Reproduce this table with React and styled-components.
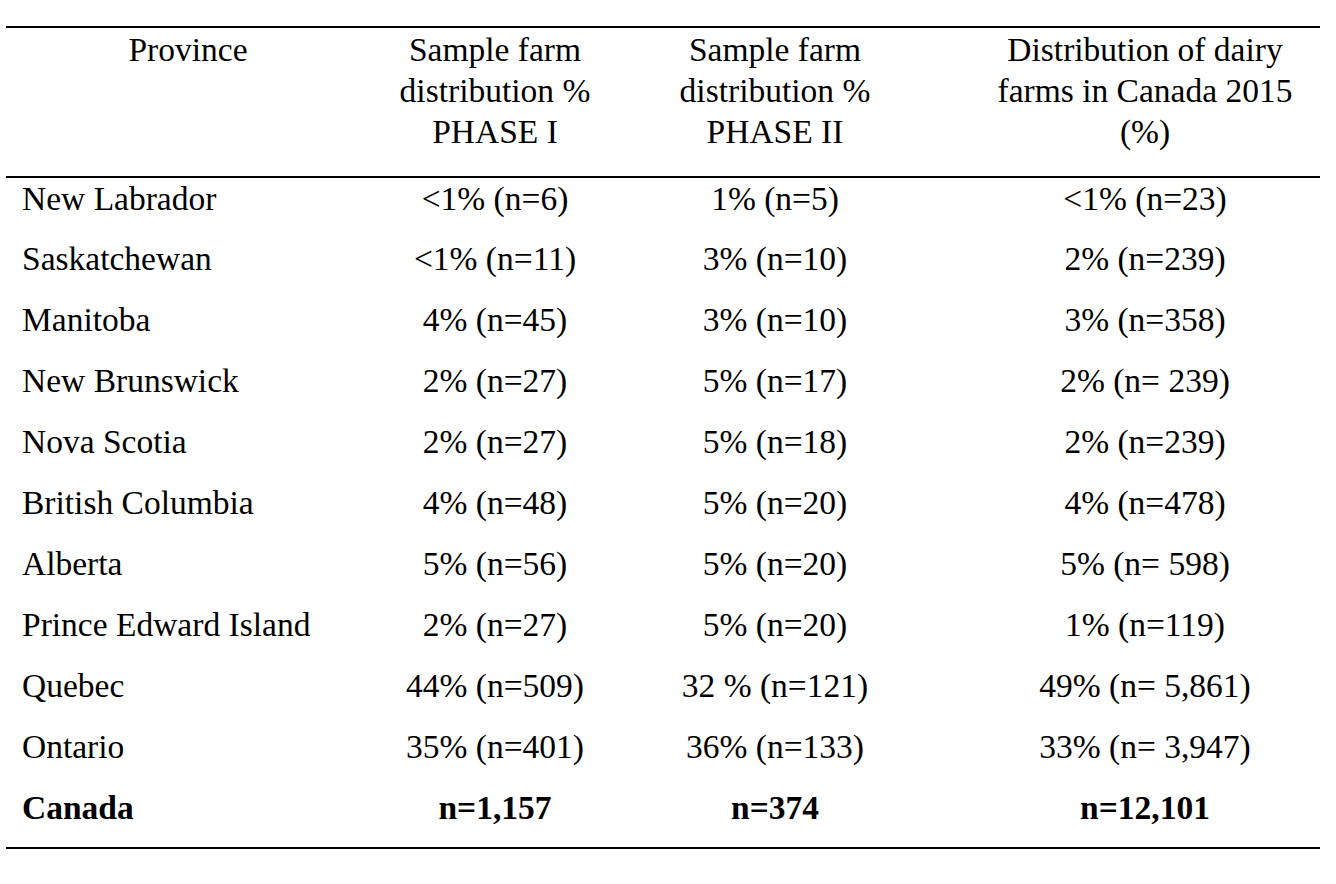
import React from 'react';
import styled, { createGlobalStyle } from 'styled-components';

const GlobalStyle = createGlobalStyle`
  html, body {
    margin: 0;
    padding: 0;
    background: #ffffff;
  }
  body {
    font-family: "Liberation Serif", "Times New Roman", serif;
    color: #000000;
  }
`;

const columns = [
  { key: 'province', width: 364, title: ['Province'] },
  { key: 'phase1', width: 250, title: ['Sample farm', 'distribution %', 'PHASE I'] },
  { key: 'phase2', width: 310, title: ['Sample farm', 'distribution %', 'PHASE II'] },
  { key: 'canada', width: 390, title: ['Distribution of dairy', 'farms in Canada 2015', '(%)'], offset: 40 },
];

const rows = [
  ['New Labrador', '<1% (n=6)', '1% (n=5)', '<1% (n=23)'],
  ['Saskatchewan', '<1% (n=11)', '3% (n=10)', '2% (n=239)'],
  ['Manitoba', '4% (n=45)', '3% (n=10)', '3% (n=358)'],
  ['New Brunswick', '2% (n=27)', '5% (n=17)', '2% (n= 239)'],
  ['Nova Scotia', '2% (n=27)', '5% (n=18)', '2% (n=239)'],
  ['British Columbia', '4% (n=48)', '5% (n=20)', '4% (n=478)'],
  ['Alberta', '5% (n=56)', '5% (n=20)', '5% (n= 598)'],
  ['Prince Edward Island', '2% (n=27)', '5% (n=20)', '1% (n=119)'],
  ['Quebec', '44% (n=509)', '32 % (n=121)', '49% (n= 5,861)'],
  ['Ontario', '35% (n=401)', '36% (n=133)', '33% (n= 3,947)'],
];

const total = ['Canada', 'n=1,157', 'n=374', 'n=12,101'];

const Page = styled.div`
  padding: 26px 16px 0 6px;
`;

const Table = styled.table`
  width: 1314px;
  table-layout: fixed;
  border-collapse: collapse;
  font-size: 33.5px;
  border-top: 2px solid #000;
  border-bottom: 2px solid #000;
`;

const HeadRow = styled.tr`
  border-bottom: 2px solid #000;
`;

const HeadCell = styled.th`
  font-weight: normal;
  text-align: center;
  vertical-align: top;
  line-height: 41px;
  padding: 1px 0 24px ${p => p.$offset || 0}px;
`;

const Cell = styled.td`
  height: 61px;
  box-sizing: border-box;
  vertical-align: top;
  line-height: 38px;
  padding: 2px 0 0 ${p => (p.$first ? 16 : p.$offset || 0)}px;
  text-align: ${p => (p.$first ? 'left' : 'center')};
  font-weight: ${p => (p.$bold ? 'bold' : 'normal')};
  white-space: nowrap;
`;

const App = () => (
  <Page>
    <GlobalStyle />
    <Table>
      <colgroup>
        {columns.map(c => <col key={c.key} style={{ width: c.width }} />)}
      </colgroup>
      <thead>
        <HeadRow>
          {columns.map(c => (
            <HeadCell key={c.key} $offset={c.offset}>
              {c.title.map((line, i) => (
                <React.Fragment key={i}>
                  {i > 0 && <br />}
                  {line}
                </React.Fragment>
              ))}
            </HeadCell>
          ))}
        </HeadRow>
      </thead>
      <tbody>
        {rows.map(r => (
          <tr key={r[0]}>
            {r.map((v, i) => (
              <Cell key={i} $first={i === 0} $offset={columns[i].offset}>{v}</Cell>
            ))}
          </tr>
        ))}
        <tr>
          {total.map((v, i) => (
            <Cell key={i} $first={i === 0} $offset={columns[i].offset} $bold>{v}</Cell>
          ))}
        </tr>
      </tbody>
    </Table>
  </Page>
);

export default App;
